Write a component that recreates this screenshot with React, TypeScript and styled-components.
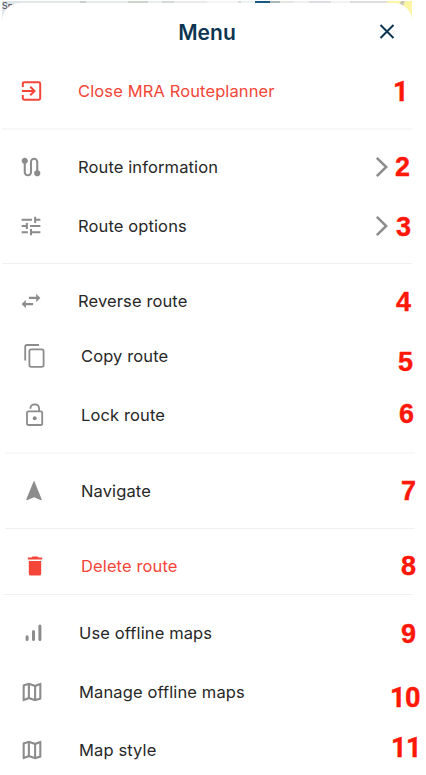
import React from "react";
import styled, { createGlobalStyle } from "styled-components";

const GlobalStyle = createGlobalStyle`
  * { box-sizing: border-box; }
  html, body { margin: 0; background: #fff; overflow: hidden; }
`;

const RED = "#f44539";
const GREY = "#8c8c8c";
const NAVY = "#0d3450";

const Screen = styled.div`
  position: relative;
  width: 426px;
  height: 775px;
  overflow: hidden;
  background: #fff;
  font-family: Inter, "Liberation Sans", sans-serif;
`;

/* Map peeking out behind the sheet's rounded top corners */
const MapBackdrop = styled.div`
  position: absolute;
  top: 1px;
  left: 2px;
  width: 410px;
  height: 26px;
  overflow: hidden;
  background: linear-gradient(
    to right,
    #dce5ea 0 20px, #e3e8e8 20px 78px, #c9cfcb 78px 84px, #e6ebe8 84px 126px,
    #cdd3cc 126px 146px, #e9eeec 146px 160px, #d5d9d6 160px 172px, #e8ebea 172px 205px,
    #f3f5f4 205px 236px, #d9dddb 236px 239px, #eef1f1 239px 253px, #16587f 253px 268px,
    #a9b7bb 268px 278px, #e5e5e2 278px 292px, #f0f0f1 292px 307px, #dcdee2 307px 329px,
    #f1f3f1 329px 348px, #dcdee0 348px 385px, #fbf5a5 385px
  );
`;

const MapLabel = styled.span`
  position: absolute;
  top: 0;
  left: 0;
  font-size: 9px;
  line-height: 9px;
  color: #4b4653;
`;

const Road = styled.span`
  position: absolute;
  top: -2px;
  right: 8px;
  width: 4px;
  height: 9px;
  background: #c9c6b4;
  transform: skewX(-20deg);
`;

const Sheet = styled.main`
  position: relative;
  margin: 3px 14px 0 2px;
  height: 772px;
  border-radius: 18px 18px 0 0;
  background: #fff;
`;

const Header = styled.header`
  position: relative;
  display: flex;
  align-items: center;
  justify-content: center;
  height: 59px;
`;

const Title = styled.h1`
  margin: 0;
  font-size: 21px;
  font-weight: 600;
  line-height: 26px;
  color: ${NAVY};
`;

const CloseButton = styled.button`
  position: absolute;
  right: 14px;
  top: 17px;
  display: flex;
  padding: 0;
  border: 0;
  background: none;
`;

const Row = styled.div<{ $h: number; $shift: number; $danger?: boolean }>`
  position: relative;
  display: flex;
  align-items: center;
  height: ${(p) => p.$h}px;
  padding-left: ${(p) => 16 + p.$shift}px;
  color: ${(p) => (p.$danger ? RED : "#272727")};
`;

const IconSlot = styled.span<{ $danger?: boolean }>`
  display: flex;
  width: 26px;
  height: 26px;
  margin-right: 34px;
  color: ${(p) => (p.$danger ? RED : GREY)};
`;

const Label = styled.span`
  font-size: 16.5px;
  line-height: 20px;
  letter-spacing: 0.12px;
  white-space: nowrap;
`;

const ChevronSlot = styled.span`
  display: flex;
  margin-left: auto;
  margin-right: 23px;
  color: ${GREY};
`;

const Divider = styled.div<{ $h: number; $line: number; $soft?: boolean; $shift: number }>`
  height: ${(p) => p.$h}px;
  padding-top: ${(p) => p.$line}px;
  &::before {
    content: "";
    display: block;
    height: ${(p) => (p.$soft ? 2 : 1)}px;
    margin: 0 ${(p) => -p.$shift}px 0 ${(p) => p.$shift}px;
    background: ${(p) => (p.$soft ? "#f8f8f8" : "#f1f1f1")};
  }
`;

/* Roboto supplies the footless "1" */
const Callout = styled.span<{ $x: number; $dy: number; $plainOne: boolean }>`
  position: absolute;
  left: ${(p) => p.$x - 2}px;
  top: calc(50% + ${(p) => p.$dy - 14}px);
  font: bold 27px/28px ${(p) => (p.$plainOne ? "Roboto" : '"Liberation Sans"')}, Arial, sans-serif;
  letter-spacing: -0.6px;
  color: #ff1708;
  -webkit-text-stroke: 0.4px #ff1708;
`;

const Svg = ({ children, size = 26, view = "0 0 26 26" }: { children: React.ReactNode; size?: number; view?: string }) => (
  <svg width={size} height={size} viewBox={view} fill="none" stroke="currentColor" strokeWidth="1.8">
    {children}
  </svg>
);

const MATERIAL_VIEW = "-0.5 -0.5 25 25";
const Material = ({ d }: { d: string }) => (
  <Svg view={MATERIAL_VIEW}>
    <path d={d} fill="currentColor" stroke="none" />
  </Svg>
);

const ExitIcon = () => (
  <Svg>
    <path
      strokeWidth="2"
      d="M4.8 9V5.7Q4.8 4.3 6.2 4.3H20.8Q22.2 4.3 22.2 5.7V20.3Q22.2 21.7 20.8 21.7H6.2Q4.8 21.7 4.8 20.3V17M3.9 13H16.5M12.3 8.8L16.5 13L12.3 17.2"
    />
  </Svg>
);
const RouteIcon = () => (
  <Material d="M19 15.18V7c0-2.21-1.79-4-4-4s-4 1.79-4 4v10c0 1.1-.9 2-2 2s-2-.9-2-2V8.82C8.16 8.4 9 7.3 9 6c0-1.66-1.34-3-3-3S3 4.34 3 6c0 1.3.84 2.4 2 2.82V17c0 2.21 1.79 4 4 4s4-1.79 4-4V7c0-1.1.9-2 2-2s2 .9 2 2v8.18c-1.16.41-2 1.51-2 2.82 0 1.66 1.34 3 3 3s3-1.34 3-3c0-1.3-.84-2.4-2-2.82z" />
);
const TuneIcon = () => (
  <Material d="M3 17v2h6v-2H3zM3 5v2h10V5H3zm10 16v-2h8v-2h-8v-2h-2v6h2zM7 9v2H3v2h4v2h2V9H7zm14 4v-2H11v2h10zm-6-4h2V7h4V5h-4V3h-2v6z" />
);
const SwapIcon = () => <Material d="M6.99 11L3 15l3.99 4v-3H14v-2H6.99v-3zM21 9l-3.99-4v3H10v2h7.01v3L21 9z" />;
const CopyIcon = () => (
  <Svg>
    <path d="M4.2 17.5V3.8Q4.2 2 6 2H18" />
    <rect x="8.4" y="6.4" width="14.2" height="17.4" rx="1.8" />
  </Svg>
);
const LockOpenIcon = () => (
  <Svg>
    <rect x="6" y="9.4" width="15.2" height="13.6" rx="1.6" />
    <path d="M9.4 6.8V6Q9.8 2.4 13.7 2.3Q17.9 2.4 18.1 6.4V9.4" />
    <circle cx="13.7" cy="16.2" r="2" fill="currentColor" stroke="none" />
  </Svg>
);
const NavigateIcon = () => <Material d="M12 2L4.5 20.29l.71.71L12 18l6.79 3 .71-.71z" />;
const TrashIcon = () => (
  <Svg>
    <path
      d="M7.8 8H20.2V20.4Q20.2 22.6 18 22.6H10Q7.8 22.6 7.8 20.4ZM6.8 4.4H10.4L11.3 3.5H16.7L17.6 4.4H21.2V6.4H6.8Z"
      fill="currentColor"
      stroke="none"
    />
  </Svg>
);
const BarsIcon = () => (
  <Svg>
    <path d="M8.1 16.8V19.6M14.5 11.4V19.6M20.9 6V19.6" strokeWidth="3" strokeLinecap="round" />
  </Svg>
);
const MapIcon = () => (
  <Material d="M20.5 3l-.16.03L15 5.1 9 3 3.36 4.9c-.21.07-.36.25-.36.48V20.5c0 .28.22.5.5.5l.16-.03L9 18.9l6 2.1 5.64-1.9c.21-.07.36-.25.36-.48V3.5c0-.28-.22-.5-.5-.5zM10 5.47l4 1.4v11.66l-4-1.4V5.47zm-5 .99l3-1.01v11.7l-3 1.16V6.46zm14 11.08l-3 1.01V6.86l3-1.16v11.84z" />
);

type ItemProps = {
  icon: React.ReactNode;
  label: string;
  n: number;
  h: number;
  x: number;
  dy?: number;
  shift?: number;
  danger?: boolean;
  chevron?: boolean;
};

const Item = ({ icon, label, n, h, x, dy = 0, shift = 0, danger, chevron }: ItemProps) => (
  <Row $h={h} $shift={shift} $danger={danger}>
    <IconSlot $danger={danger}>{icon}</IconSlot>
    <Label>{label}</Label>
    {chevron && (
      <ChevronSlot>
        <svg width="14" height="22" viewBox="0 0 14 22" fill="none" stroke="currentColor" strokeWidth="2.5">
          <path d="M1.8 1.8L11.2 11L1.8 20.2" />
        </svg>
      </ChevronSlot>
    )}
    <Callout $x={x} $dy={dy} $plainOne={String(n).includes("1")}>
      {n}
    </Callout>
  </Row>
);

export default function App() {
  return (
    <Screen>
      <GlobalStyle />
      <MapBackdrop>
        <MapLabel>Spr</MapLabel>
        <Road />
      </MapBackdrop>
      <Sheet>
        <Header>
          <Title>Menu</Title>
          <CloseButton aria-label="Close">
            <svg width="22" height="22" viewBox="0 0 22 22" fill="none" stroke={NAVY} strokeWidth="2">
              <path d="M4.5 5L17.5 18M17.5 5L4.5 18" />
            </svg>
          </CloseButton>
        </Header>
        <Item icon={<ExitIcon />} label="Close MRA Routeplanner" n={1} h={58} x={393} dy={1} danger />
        <Divider $h={18} $line={8} $shift={0} $soft />
        <Item icon={<RouteIcon />} label="Route information" n={2} h={58} x={395} chevron />
        <Item icon={<TuneIcon />} label="Route options" n={3} h={59} x={396} dy={1} chevron />
        <Divider $h={16} $line={8} $shift={0} />
        <Item icon={<SwapIcon />} label="Reverse route" n={4} h={59} x={396} dy={1} />
        <Item icon={<CopyIcon />} label="Copy route" n={5} h={51} x={398} dy={6} shift={3} />
        <Item icon={<LockOpenIcon />} label="Lock route" n={6} h={67} x={399} dy={-1} shift={3} />
        <Divider $h={13} $line={4} $shift={3} $soft />
        <Item icon={<NavigateIcon />} label="Navigate" n={7} h={60} x={401} shift={3} />
        <Divider $h={19} $line={7} $shift={3} />
        <Item icon={<TrashIcon />} label="Delete route" n={8} h={51} x={401} shift={3} danger />
        <Divider $h={13} $line={3} $shift={1} />
        <Item icon={<BarsIcon />} label="Use offline maps" n={9} h={58} x={401} dy={1} shift={1} />
        <Item icon={<MapIcon />} label="Manage offline maps" n={10} h={59} x={390} dy={6} shift={1} />
        <Item icon={<MapIcon />} label="Map style" n={11} h={58} x={391} dy={-2} shift={1} />
      </Sheet>
    </Screen>
  );
}
